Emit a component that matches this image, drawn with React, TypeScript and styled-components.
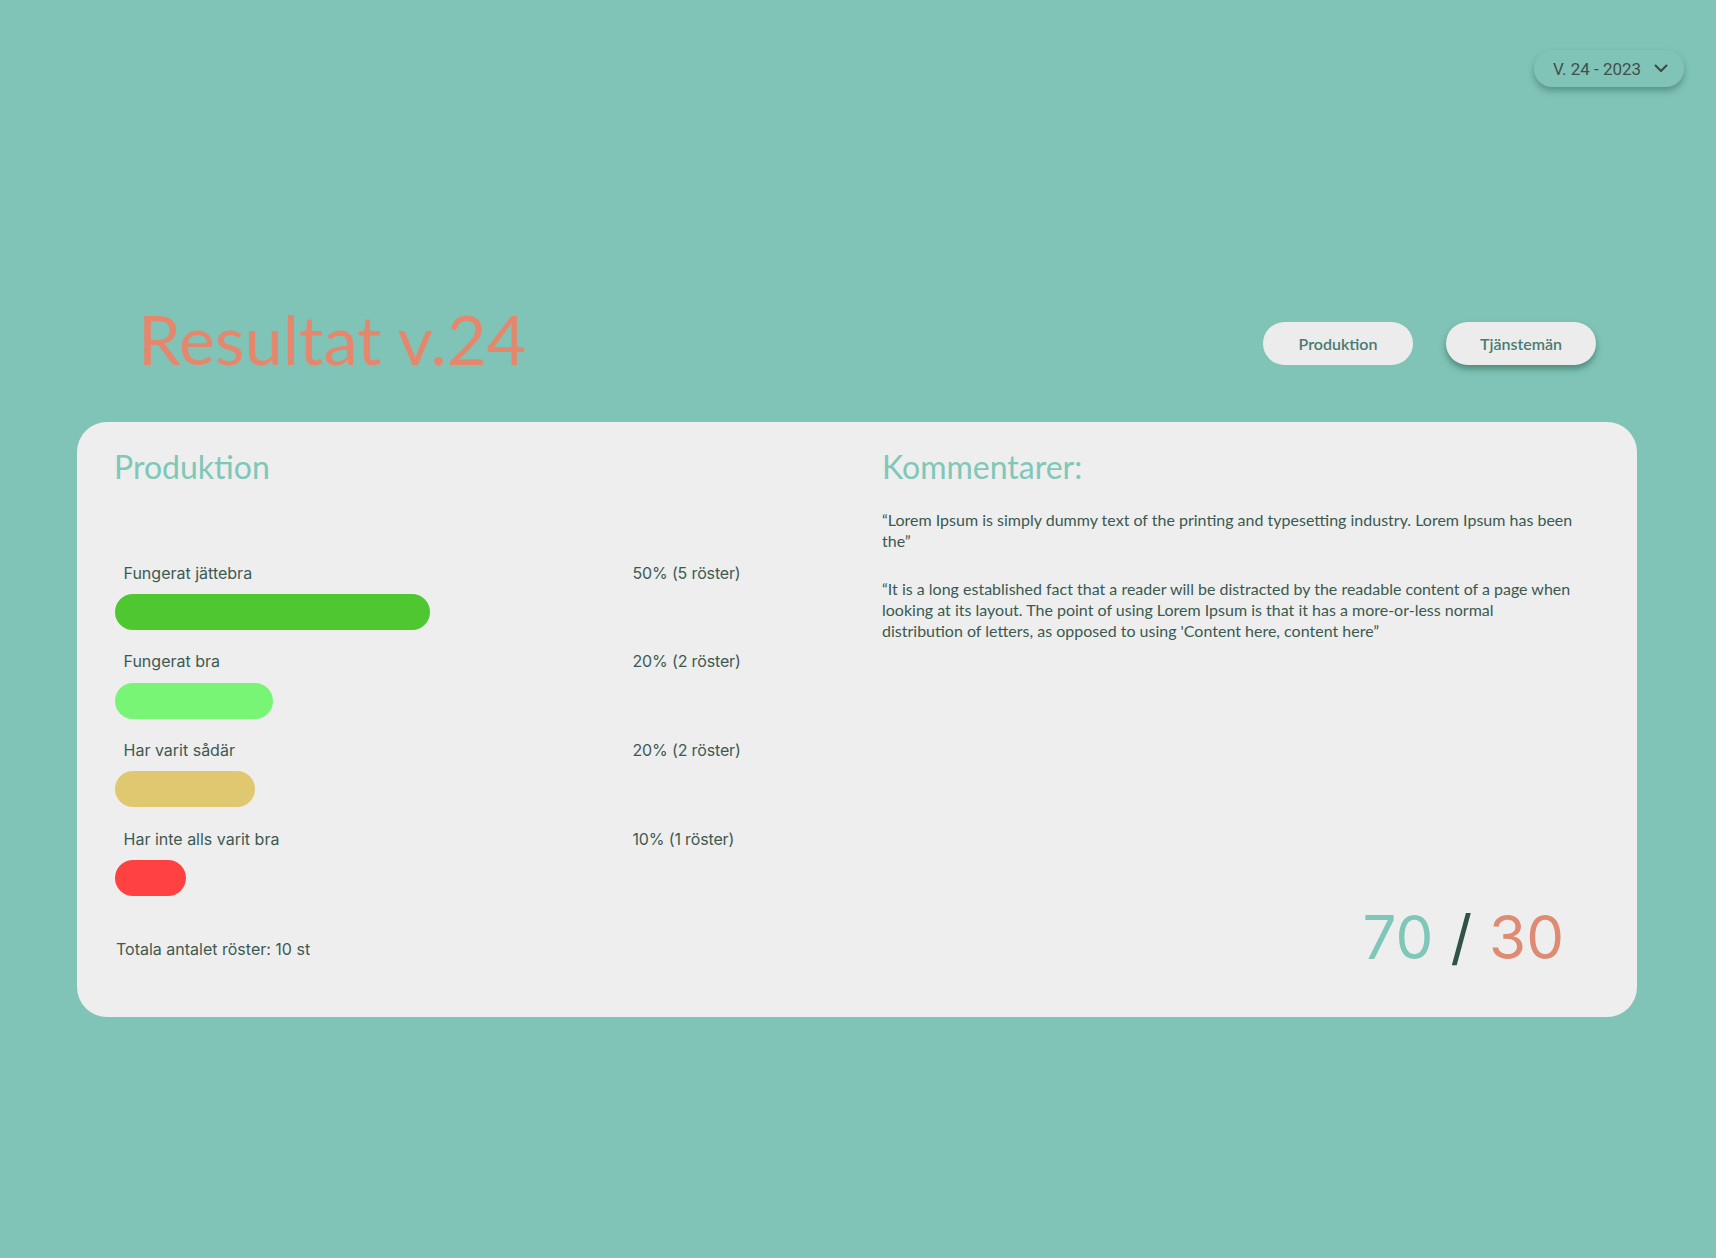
import React from "react";
import styled, { createGlobalStyle } from "styled-components";

const Global = createGlobalStyle`
  html, body { margin: 0; padding: 0; }
  body { background: #80c4b7; font-family: Lato, "Noto Sans", sans-serif; }
  * { box-sizing: border-box; }
`;

const Page = styled.div`
  min-height: 1258px;
  padding: 50px 32px 0 77px;
`;

const TopBar = styled.div`
  display: flex;
  justify-content: flex-end;
`;

const Dropdown = styled.button`
  width: 150px;
  height: 37px;
  border: none;
  border-radius: 18px;
  background: #80c4b7;
  box-shadow: 0 4px 6px rgba(40, 90, 80, 0.45);
  display: flex;
  align-items: center;
  justify-content: space-between;
  padding: 0 16px 0 19px;
  font-family: Roboto, "Liberation Sans", sans-serif;
  font-size: 17px;
  color: #424f4c;
  cursor: pointer;
`;

const Main = styled.div`
  margin-right: 47px;
`;

const Header = styled.div`
  margin-top: 217px;
  display: flex;
  justify-content: space-between;
  align-items: flex-start;
  padding: 0 41px 0 61px;
`;

const Title = styled.h1`
  margin: 0;
  font-family: Lato, sans-serif;
  font-weight: 400;
  font-size: 68.5px;
  line-height: 70px;
  color: #e5876d;
`;

const Tabs = styled.div`
  display: flex;
  gap: 33px;
  margin-top: 17.5px;
`;

const Tab = styled.button<{ $active?: boolean }>`
  width: 150px;
  height: 43px;
  border: none;
  border-radius: 22px;
  background: #ececec;
  box-shadow: ${(p) => (p.$active ? "0 4px 6px rgba(30, 80, 70, 0.5)" : "none")};
  font-family: Lato, sans-serif;
  font-weight: 600;
  font-size: 16px;
  color: #4b7b70;
  cursor: pointer;
`;

const Card = styled.section`
  margin-top: 48px;
  width: 1560px;
  background: #eeeeee;
  border-radius: 30px;
  display: grid;
  grid-template-columns: 768px 692px;
  padding: 25.5px 63px 58px 37px;
`;

const Column = styled.div`
  display: flex;
  flex-direction: column;
`;

const Heading = styled.h2`
  margin: 0;
  font-family: Lato, sans-serif;
  font-weight: 400;
  font-size: 32px;
  line-height: 38px;
  color: #7fc7b8;
`;

const Options = styled.div`
  margin-top: 77px;
  display: flex;
  flex-direction: column;
  gap: 21.2px;
`;

const Option = styled.div`
  display: flex;
  flex-direction: column;
  gap: 11.5px;
`;

const OptionHead = styled.div`
  display: flex;
  padding-left: 9.5px;
  font-family: Inter, "Noto Sans", sans-serif;
  font-size: 16px;
  line-height: 20px;
  color: #3d5a52;
`;

const OptionLabel = styled.span`
  width: 509px;
`;

const OptionValue = styled.span`
  letter-spacing: -0.15px;
`;

const Bar = styled.div<{ $color: string }>`
  height: 36px;
  border-radius: 18px;
  margin-left: 1px;
  background: ${(p) => p.$color};
`;

const Total = styled.div`
  margin-top: 43px;
  padding-left: 2px;
  font-family: Inter, "Noto Sans", sans-serif;
  font-size: 16px;
  line-height: 20px;
  color: #3d5a52;
`;

const Comments = styled.div`
  margin-top: 24.5px;
`;

const Comment = styled.p`
  margin: 0 0 27.5px;
  font-family: Lato, sans-serif;
  font-size: 16px;
  line-height: 20.8px;
  color: #3a5a50;
`;

const Score = styled.div`
  margin-top: auto;
  margin-bottom: -8px;
  align-self: flex-end;
  margin-right: 10px;
  font-family: Inter, "Noto Sans", sans-serif;
  font-size: 60px;
  line-height: 60px;
  font-weight: 400;
  display: flex;
  gap: 17px;
`;

const ScorePart = styled.span<{ $color: string }>`
  color: ${(p) => p.$color};
`;

const options = [
  { label: "Fungerat jättebra", pct: "50% (5 röster)", width: 315, color: "#4ec731" },
  { label: "Fungerat bra", pct: "20% (2 röster)", width: 158, color: "#78f575" },
  { label: "Har varit sådär", pct: "20% (2 röster)", width: 140, color: "#e0c870" },
  { label: "Har inte alls varit bra", pct: "10% (1 röster)", width: 71, color: "#ff4141" },
];

export default function App() {
  return (
    <>
      <Global />
      <Page>
        <TopBar>
          <Dropdown>
            <span>V. 24 - 2023</span>
            <svg width="14" height="9" viewBox="0 0 14 9" fill="none">
              <polyline points="1.5,1.5 7,7 12.5,1.5" stroke="#3d4745" strokeWidth="2" strokeLinecap="round" strokeLinejoin="round" />
            </svg>
          </Dropdown>
        </TopBar>
        <Main>
          <Header>
            <Title>Resultat v.24</Title>
            <Tabs>
              <Tab>Produktion</Tab>
              <Tab $active>Tjänstemän</Tab>
            </Tabs>
          </Header>
          <Card>
            <Column>
              <Heading>Produktion</Heading>
              <Options>
                {options.map((o) => (
                  <Option key={o.label}>
                    <OptionHead>
                      <OptionLabel>{o.label}</OptionLabel>
                      <OptionValue>{o.pct}</OptionValue>
                    </OptionHead>
                    <Bar $color={o.color} style={{ width: o.width }} />
                  </Option>
                ))}
              </Options>
              <Total>Totala antalet röster: 10 st</Total>
            </Column>
            <Column>
              <Heading>Kommentarer:</Heading>
              <Comments>
                <Comment>
                  “Lorem Ipsum is simply dummy text of the printing and typesetting industry. Lorem Ipsum has been the”
                </Comment>
                <Comment>
                  “It is a long established fact that a reader will be distracted by the readable content of a page when looking at its layout. The point of using Lorem Ipsum is that it has a more-or-less normal distribution of letters, as opposed to using 'Content here, content here”
                </Comment>
              </Comments>
              <Score>
                <ScorePart $color="#7fc7b8">70</ScorePart>
                <ScorePart $color="#2f5249">/</ScorePart>
                <ScorePart $color="#dd8b72">30</ScorePart>
              </Score>
            </Column>
          </Card>
        </Main>
      </Page>
    </>
  );
}
